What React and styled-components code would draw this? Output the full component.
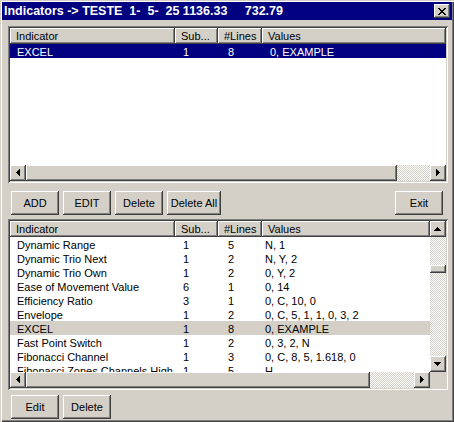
import React from 'react';
import styled, { createGlobalStyle } from 'styled-components';

const FACE = '#d4d0c8';

const Global = createGlobalStyle`
  html, body { margin: 0; padding: 0; background: ${FACE}; }
  body { font-family: "Liberation Sans", Arial, sans-serif; font-size: 11px; color: #000; }
  * { box-sizing: border-box; }
`;

const raised = `
  background: ${FACE};
  box-shadow: inset -1px -1px #404040, inset 1px 1px #ffffff, inset -2px -2px #808080, inset 2px 2px ${FACE};
`;

const Window = styled.div`
  width: 454px;
  height: 422px;
  background: ${FACE};
  padding: 2px;
  box-shadow: inset 1px 1px ${FACE}, inset 2px 2px #ffffff, inset -1px -1px #404040, inset -2px -2px #808080;
  display: flex;
  flex-direction: column;
`;

const TitleBar = styled.div`
  height: 18px;
  background: #000080;
  color: #fff;
  font-weight: bold;
  font-size: 12.5px;
  display: flex;
  align-items: center;
  justify-content: space-between;
  padding: 0 2px 0 2px;
`;

const TitleText = styled.span`
  white-space: pre;
`;

const CloseBtn = styled.div`
  width: 16px;
  height: 14px;
  ${raised}
  display: flex;
  align-items: center;
  justify-content: center;
`;

const Body = styled.div`
  display: flex;
  flex-direction: column;
  padding: 3px 4px 0 6px;
`;

const ListFrame = styled.div`
  width: 440px;
  height: ${p => p.$h}px;
  margin-top: ${p => p.$mt}px;
  padding: 2px;
  background: ${FACE};
  box-shadow: inset 1px 1px #808080, inset -1px -1px #ffffff, inset 2px 2px #404040, inset -2px -2px ${FACE};
  display: grid;
  grid-template-columns: ${p => (p.$vscroll ? '1fr 16px' : '1fr')};
  grid-template-rows: 1fr 16px;
`;

const ListArea = styled.div`
  background: #fff;
  overflow: hidden;
  min-height: 0;
`;

const HeaderRow = styled.div`
  display: grid;
  grid-template-columns: 165px 43px 44px 1fr;
  height: 16px;
`;

const HeaderCell = styled.div`
  ${raised}
  padding: 2px 0 0 6px;
  line-height: 13px;
  white-space: nowrap;
  overflow: hidden;
`;

const Row = styled.div`
  display: grid;
  grid-template-columns: 165px 43px 44px 1fr;
  height: 14px;
  background: ${p => (p.$sel === 'active' ? '#000080' : p.$sel === 'inactive' ? FACE : 'transparent')};
  color: ${p => (p.$sel === 'active' ? '#fff' : '#000')};
`;

const Cell = styled.div`
  padding: 2px 2px 0 ${p => p.$pad}px;
  line-height: 12px;
  white-space: nowrap;
  overflow: hidden;
`;

const HScroll = styled.div`
  display: flex;
  height: 16px;
`;

const VScroll = styled.div`
  display: flex;
  flex-direction: column;
  width: 16px;
  min-height: 0;
`;

const ArrowBtn = styled.div`
  width: 16px;
  height: 16px;
  flex: none;
  ${raised}
  display: flex;
  align-items: center;
  justify-content: center;
`;

const Track = styled.div`
  flex: 1;
  display: flex;
  flex-direction: ${p => (p.$vertical ? 'column' : 'row')};
  background-color: #fff;
  background-image: repeating-conic-gradient(${FACE} 0% 25%, #ffffff 0% 50%);
  background-size: 2px 2px;
`;

const Thumb = styled.div`
  flex: none;
  ${raised}
  width: ${p => (p.$vertical ? '16px' : `${p.$size}px`)};
  height: ${p => (p.$vertical ? `${p.$size}px` : '16px')};
  margin-top: ${p => (p.$vertical ? `${p.$offset}px` : '0')};
`;

const Corner = styled.div`
  background: ${FACE};
`;

const ButtonRow = styled.div`
  display: flex;
  gap: 4px;
  margin-top: ${p => p.$mt}px;
  padding: 0 5px 0 3px;
`;

const Button = styled.div`
  width: ${p => p.$w || 48}px;
  height: 24px;
  ${raised}
  display: flex;
  align-items: center;
  justify-content: center;
  font-size: 11px;
  margin-left: ${p => (p.$push ? 'auto' : '0')};
`;

const Arrow = ({ dir }) => {
  const rects = [];
  for (let i = 0; i < 4; i++) {
    const len = 7 - i * 2;
    if (dir === 'right') rects.push(<rect key={i} x={6 + i} y={4 + i} width={1} height={len} />);
    if (dir === 'left') rects.push(<rect key={i} x={9 - i} y={4 + i} width={1} height={len} />);
    if (dir === 'up') rects.push(<rect key={i} x={4 + i} y={9 - i} width={len} height={1} />);
    if (dir === 'down') rects.push(<rect key={i} x={4 + i} y={6 + i} width={len} height={1} />);
  }
  return (
    <svg width="16" height="16" viewBox="0 0 16 16" shapeRendering="crispEdges" fill="#000">
      {rects}
    </svg>
  );
};

const CloseGlyph = () => (
  <svg width="8" height="7" viewBox="0 0 8 7" shapeRendering="crispEdges" fill="#000">
    <rect x="0" y="0" width="2" height="1" />
    <rect x="6" y="0" width="2" height="1" />
    <rect x="1" y="1" width="2" height="1" />
    <rect x="5" y="1" width="2" height="1" />
    <rect x="2" y="2" width="4" height="1" />
    <rect x="3" y="3" width="2" height="1" />
    <rect x="2" y="4" width="4" height="1" />
    <rect x="1" y="5" width="2" height="1" />
    <rect x="5" y="5" width="2" height="1" />
    <rect x="0" y="6" width="2" height="1" />
    <rect x="6" y="6" width="2" height="1" />
  </svg>
);

const headers = ['Indicator', 'Sub...', '#Lines', 'Values'];

const topRows = [{ name: 'EXCEL', sub: '1', lines: '8', values: '0, EXAMPLE', sel: 'active' }];

const bottomRows = [
  { name: 'Dynamic Range', sub: '1', lines: '5', values: 'N, 1' },
  { name: 'Dynamic Trio Next', sub: '1', lines: '2', values: 'N, Y, 2' },
  { name: 'Dynamic Trio Own', sub: '1', lines: '2', values: '0, Y, 2' },
  { name: 'Ease of Movement Value', sub: '6', lines: '1', values: '0, 14' },
  { name: 'Efficiency Ratio', sub: '3', lines: '1', values: '0, C, 10, 0' },
  { name: 'Envelope', sub: '1', lines: '2', values: '0, C, 5, 1, 1, 0, 3, 2' },
  { name: 'EXCEL', sub: '1', lines: '8', values: '0, EXAMPLE', sel: 'inactive' },
  { name: 'Fast Point Switch', sub: '1', lines: '2', values: '0, 3, 2, N' },
  { name: 'Fibonacci Channel', sub: '1', lines: '3', values: '0, C, 8, 5, 1.618, 0' },
  { name: 'Fibonacci Zones Channels High', sub: '1', lines: '5', values: 'H' },
];

const ListView = ({ rows, height, mt, pads, thumb, vthumb }) => (
  <ListFrame $h={height} $mt={mt} $vscroll={!!vthumb}>
    <ListArea>
      <HeaderRow>
        {headers.map(h => (
          <HeaderCell key={h}>{h}</HeaderCell>
        ))}
      </HeaderRow>
      {rows.map((r, i) => (
        <Row key={i} $sel={r.sel}>
          <Cell $pad={pads[0]}>{r.name}</Cell>
          <Cell $pad={pads[1]}>{r.sub}</Cell>
          <Cell $pad={pads[2]}>{r.lines}</Cell>
          <Cell $pad={pads[3]}>{r.values}</Cell>
        </Row>
      ))}
    </ListArea>
    {vthumb && (
      <VScroll>
        <ArrowBtn><Arrow dir="up" /></ArrowBtn>
        <Track $vertical>
          <Thumb $vertical $size={vthumb.size} $offset={vthumb.offset} />
        </Track>
        <ArrowBtn><Arrow dir="down" /></ArrowBtn>
      </VScroll>
    )}
    <HScroll>
      <ArrowBtn><Arrow dir="left" /></ArrowBtn>
      <Track>
        <Thumb $size={thumb} />
      </Track>
      <ArrowBtn><Arrow dir="right" /></ArrowBtn>
    </HScroll>
    {vthumb && <Corner />}
  </ListFrame>
);

export default function App() {
  return (
    <>
      <Global />
      <Window>
        <TitleBar>
          <TitleText>{'Indicators -> TESTE  1-  5-  25 1136.33     732.79'}</TitleText>
          <CloseBtn><CloseGlyph /></CloseBtn>
        </TitleBar>
        <Body>
          <ListView rows={topRows} height={157} mt={3} pads={[7, 8, 10, 8]} thumb={371} />
          <ButtonRow $mt={8}>
            <Button>ADD</Button>
            <Button>EDIT</Button>
            <Button>Delete</Button>
            <Button $w={54}>Delete All</Button>
            <Button $push>Exit</Button>
          </ButtonRow>
          <ListView
            rows={bottomRows}
            height={171}
            mt={4}
            pads={[7, 8, 10, 3]}
            thumb={344}
            vthumb={{ size: 8, offset: 28 }}
          />
          <ButtonRow $mt={5}>
            <Button>Edit</Button>
            <Button>Delete</Button>
          </ButtonRow>
        </Body>
      </Window>
    </>
  );
}
